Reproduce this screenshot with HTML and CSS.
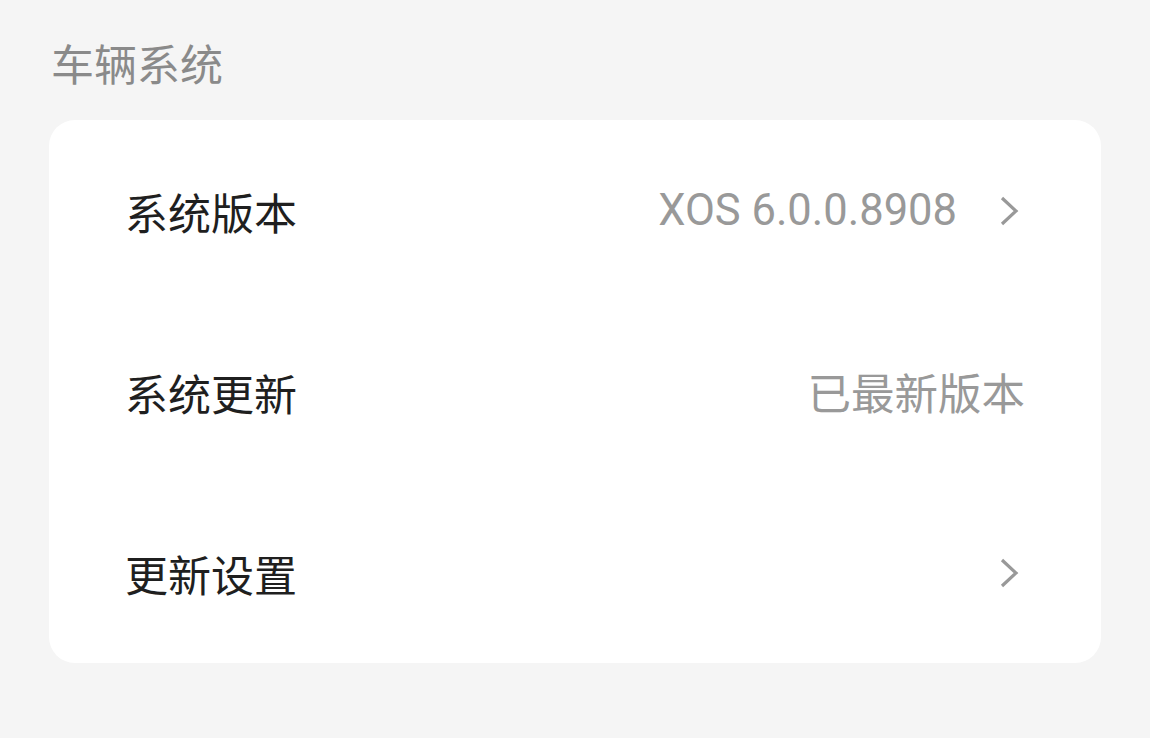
FILE: index.html
```html
<!DOCTYPE html>
<html lang="zh-CN">
<head>
    <meta charset="UTF-8">
    <meta name="viewport" content="width=device-width, initial-scale=1.0">
    <title>车辆系统</title>
    <link rel="stylesheet" href="styles.css">
</head>
<body>
    <div class="page">
        <h2 class="group-title">车辆系统</h2>
        <div class="card">
            <div class="row">
                <span class="label">系统版本</span>
                <span class="value">XOS 6.0.0.8908</span>
                <svg class="chevron" viewBox="0 0 20 32"><path d="M3 3 L17 16 L3 29" /></svg>
            </div>
            <div class="row">
                <span class="label">系统更新</span>
                <span class="value">已最新版本</span>
            </div>
            <div class="row">
                <span class="label">更新设置</span>
                <svg class="chevron" viewBox="0 0 20 32"><path d="M3 3 L17 16 L3 29" /></svg>
            </div>
        </div>
    </div>
</body>
</html>
```

FILE: styles.css
```css
body {
    margin: 0;
    background: #f5f5f5;
    font-family: Roboto, "Noto Sans CJK SC", sans-serif;
}
.page {
    padding: 0 49px;
}
.group-title {
    margin: 0 0 24px 0;
    padding: 36px 0 0 2px;
    font-size: 43px;
    line-height: 60px;
    font-weight: normal;
    color: #8a8a8a;
}
.card {
    background: #fff;
    border-radius: 26px;
}
.row {
    display: flex;
    align-items: center;
    height: 181px;
    padding: 0 76px;
}
.label {
    flex: 1;
    font-size: 43px;
    color: #1f1f1f;
}
.value {
    font-size: 43.5px;
    color: #999;
}
.chevron {
    width: 20px;
    height: 32px;
    margin-left: 42px;
    margin-right: 6px;
}
.chevron path {
    fill: none;
    stroke: #999;
    stroke-width: 3.2;
}
```
